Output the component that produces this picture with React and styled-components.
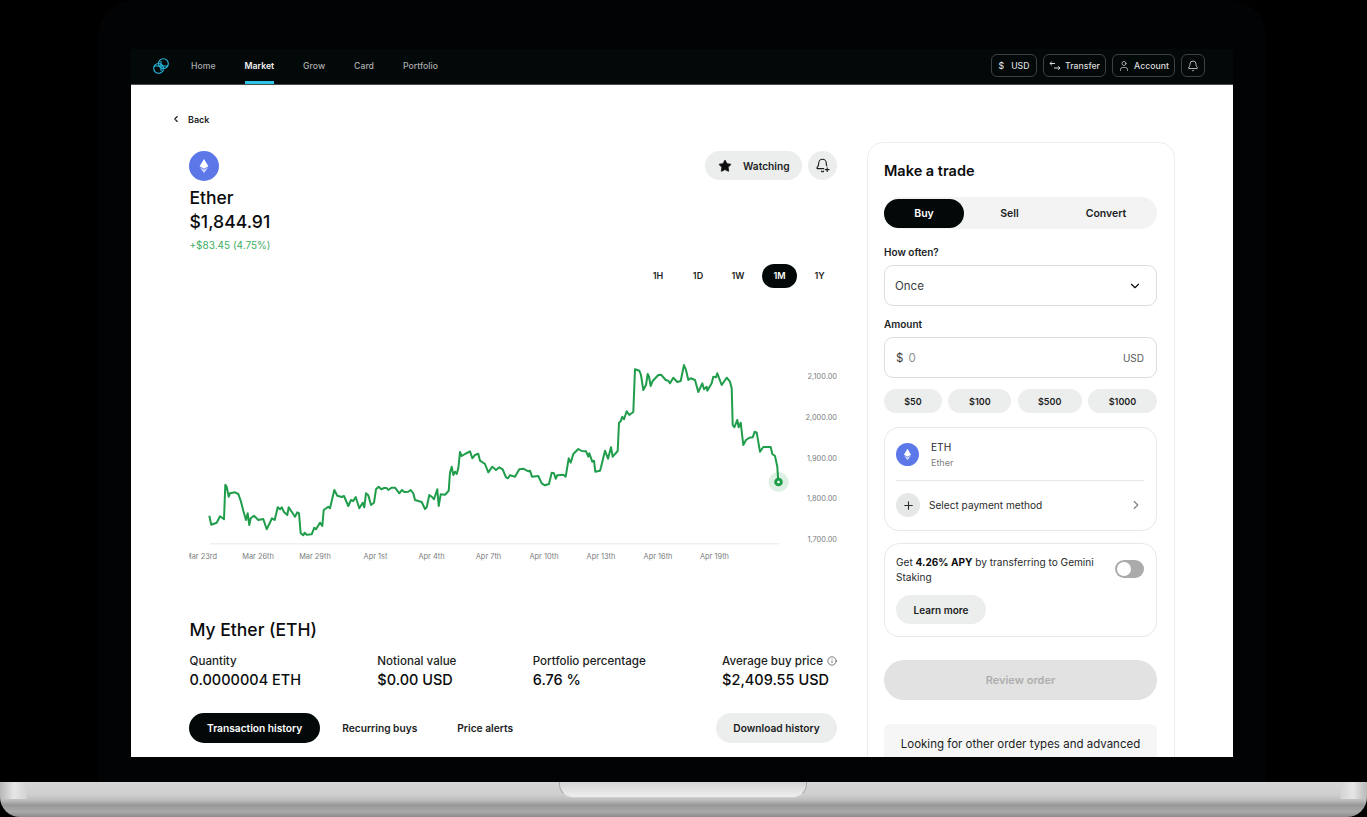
import React from 'react';
import styled, { createGlobalStyle } from 'styled-components';
import { Bell, ChevronDown, ChevronLeft, ChevronRight, Info, Plus, Star, User } from 'lucide-react';

const GlobalStyle = createGlobalStyle`
  html, body {
    margin: 0;
    background: #000;
  }
  body {
    font-family: Inter, 'Liberation Sans', sans-serif;
    color: #0a0c0d;
    overflow: hidden;
  }
  * {
    box-sizing: border-box;
  }
`;

const Page = styled.div`
  width: 1367px;
  height: 817px;
  background: #000;
  overflow: hidden;
`;

const Bezel = styled.div`
  width: 1168px;
  height: 782px;
  margin-left: 98px;
  padding: 49px 33px 25px;
  background: #020304;
  border-radius: 36px 36px 0 0;
`;

const Nav = styled.nav`
  display: flex;
  align-items: stretch;
  height: 36px;
  padding: 0 28px 0 22px;
  background: #030809;
  border-bottom: 1px solid #4a4c4d;
`;

const Logo = styled.svg`
  align-self: center;
  width: 16px;
  height: 16px;
  margin-right: 22px;
  margin-bottom: 2px;
`;

const NavLinks = styled.div`
  display: flex;
  gap: 29px;
`;

const NavLink = styled.a`
  display: flex;
  align-items: center;
  height: 35px;
  margin-bottom: -1px;
  padding-top: 1px;
  font-size: 8.7px;
  font-weight: ${({ $active }) => ($active ? 600 : 500)};
  color: ${({ $active }) => ($active ? '#f2f2f2' : '#a9abab')};
  border-bottom: 3px solid ${({ $active }) => ($active ? '#2bc3e6' : 'transparent')};
`;

const NavActions = styled.div`
  display: flex;
  align-items: center;
  gap: 6px;
  margin-left: auto;
  padding-bottom: 2px;
`;

const NavButton = styled.button`
  display: flex;
  align-items: center;
  justify-content: center;
  gap: ${({ $gap }) => $gap || 4}px;
  width: ${({ $width }) => $width}px;
  height: 23px;
  padding: 0;
  font: 500 8.7px Inter, sans-serif;
  color: #dcdddd;
  background: transparent;
  border: 1px solid #3e4142;
  border-radius: 6px;
`;

const Screen = styled.main`
  height: 672px;
  background: #fff;
  overflow: hidden;
`;

const BackRow = styled.div`
  display: flex;
  align-items: center;
  gap: 7px;
  height: 16px;
  margin: 26px 0 15px 40px;
  font-size: 9px;
  font-weight: 600;
  color: #1b1d1e;
`;

const Main = styled.div`
  display: flex;
  gap: 30px;
  padding: 0 58px;
`;

const Left = styled.section`
  flex: 1;
  min-width: 0;
  padding-top: 9px;
`;

const HeadRow = styled.div`
  display: flex;
  align-items: flex-start;
  justify-content: space-between;
  height: 30px;
`;

const Coin = styled.div`
  display: flex;
  align-items: center;
  justify-content: center;
  flex: none;
  width: ${({ $size }) => $size}px;
  height: ${({ $size }) => $size}px;
  background: #5b77e8;
  border-radius: 50%;
`;

const HeadActions = styled.div`
  display: flex;
  gap: 6px;
`;

const WatchButton = styled.button`
  display: flex;
  align-items: center;
  gap: 11px;
  width: 97px;
  height: 29px;
  padding: 0 0 0 13px;
  font: 600 10.2px Inter, sans-serif;
  color: #1b1d1e;
  background: #eceded;
  border: 0;
  border-radius: 15px;
`;

const RoundButton = styled.button`
  display: flex;
  align-items: center;
  justify-content: center;
  width: 29px;
  height: 29px;
  padding: 0;
  color: #1b1d1e;
  background: #eceded;
  border: 0;
  border-radius: 50%;
`;

const CoinName = styled.h1`
  margin: 5px 0 0;
  padding-left: 0.5px;
  font-size: 17.5px;
  font-weight: 500;
  line-height: 24px;
`;

const Price = styled.div`
  padding-left: 0.5px;
  font-size: 17.6px;
  font-weight: 500;
  line-height: 23px;
`;

const Change = styled.div`
  margin-top: 5px;
  padding-left: 0.5px;
  font-size: 10px;
  line-height: 14px;
  color: #3fae62;
`;

const RangeRow = styled.div`
  display: flex;
  justify-content: flex-end;
  gap: 5px;
  margin-top: 12px;
`;

const RangeTab = styled.span`
  display: flex;
  align-items: center;
  justify-content: center;
  width: 35px;
  height: 24px;
  margin-left: ${({ $active }) => ($active ? '1.5px' : '0')};
  padding-bottom: 1px;
  font-size: 9px;
  font-weight: 600;
  color: ${({ $active }) => ($active ? '#fff' : '#1b1d1e')};
  background: ${({ $active }) => ($active ? '#030809' : 'transparent')};
  border-radius: 12px;
`;

const ChartSvg = styled.svg`
  display: block;
  width: 648px;
  height: 300px;
  margin-top: 12px;
  overflow: hidden;
  text {
    font: 400 7.4px Inter, sans-serif;
    fill: #7b7d7e;
  }
`;

const SectionTitle = styled.h2`
  margin: 18px 0 0;
  padding-left: 0.5px;
  font-size: 17.5px;
  font-weight: 500;
  line-height: 24px;
`;

const Stats = styled.div`
  display: flex;
  justify-content: space-between;
  margin-top: 12px;
  padding-left: 0.5px;
`;

const StatLabel = styled.div`
  display: flex;
  align-items: center;
  gap: 4px;
  font-size: 11.6px;
  font-weight: 500;
  line-height: 14px;
  color: #1b1d1e;
`;

const StatValue = styled.div`
  margin-top: 3px;
  font-size: 14.5px;
  font-weight: 500;
  line-height: 18px;
  white-space: nowrap;
`;

const HistoryRow = styled.div`
  display: flex;
  align-items: center;
  margin-top: 24px;
`;

const HistoryTab = styled.span`
  display: flex;
  align-items: center;
  justify-content: center;
  height: 30px;
  margin-right: ${({ $gap }) => $gap}px;
  padding: ${({ $active }) => ($active ? '0 18px' : '0')};
  font-size: 10.2px;
  font-weight: 600;
  color: ${({ $active }) => ($active ? '#fff' : '#1b1d1e')};
  background: ${({ $active }) => ($active ? '#030809' : 'transparent')};
  border-radius: 15px;
`;

const DownloadButton = styled.button`
  width: 121px;
  height: 30px;
  margin-left: auto;
  padding: 0;
  font: 600 10.2px Inter, sans-serif;
  color: #1b1d1e;
  background: #eceded;
  border: 0;
  border-radius: 15px;
`;

const TradeCard = styled.aside`
  flex: none;
  width: 308px;
  height: 700px;
  padding: 16px 17px 16px 16px;
  border: 1px solid #ededed;
  border-radius: 16px;
`;

const TradeTitle = styled.h2`
  margin: 0;
  font-size: 14.5px;
  font-weight: 600;
  line-height: 24px;
`;

const Segment = styled.div`
  display: flex;
  align-items: center;
  height: 32px;
  margin-top: 14px;
  background: #f3f3f3;
  border-radius: 16px;
`;

const SegmentItem = styled.span`
  display: flex;
  align-items: center;
  justify-content: center;
  width: ${({ $width }) => $width}px;
  height: 29px;
  font-size: 10.5px;
  font-weight: 600;
  color: ${({ $active }) => ($active ? '#fff' : '#1b1d1e')};
  background: ${({ $active }) => ($active ? '#030809' : 'transparent')};
  border-radius: 15px;
`;

const FieldLabel = styled.div`
  margin-top: ${({ $top }) => $top}px;
  font-size: 10px;
  font-weight: 600;
  line-height: 14px;
  color: #1b1d1e;
`;

const Field = styled.div`
  display: flex;
  align-items: center;
  justify-content: space-between;
  height: 41px;
  margin-top: 6px;
  padding: 0 ${({ $right }) => $right}px 0 ${({ $left }) => $left}px;
  font-size: 11.5px;
  color: #3c3e3f;
  border: 1px solid #dcdddd;
  border-radius: 9px;
`;

const AmountValue = styled.span`
  display: flex;
  gap: 5px;
  color: #8d8f90;
  b {
    font-weight: 400;
    color: #3c3e3f;
  }
`;

const UsdLabel = styled.span`
  font-size: 10px;
  color: #55585a;
`;

const Chips = styled.div`
  display: flex;
  justify-content: space-between;
  margin-top: 11px;
`;

const Chip = styled.span`
  display: flex;
  align-items: center;
  justify-content: center;
  width: ${({ $width }) => $width}px;
  height: 24px;
  font-size: 9px;
  font-weight: 600;
  color: #1b1d1e;
  background: #eceded;
  border-radius: 12px;
`;

const Panel = styled.div`
  margin-top: ${({ $top }) => $top}px;
  padding: 0 12px 0 11px;
  height: ${({ $height }) => $height}px;
  border: 1px solid #e8e8e8;
  border-radius: 15px;
`;

const AssetRow = styled.div`
  display: flex;
  align-items: center;
  gap: 12px;
  height: 53px;
  border-bottom: 1px solid #e8e8e8;
`;

const AssetText = styled.div`
  padding-top: 1px;
`;

const AssetName = styled.div`
  font-size: 10.2px;
  line-height: 16px;
  color: #2a2c2d;
`;

const AssetSub = styled.div`
  font-size: 9px;
  line-height: 16px;
  color: #7d7f80;
`;

const PayRow = styled.div`
  display: flex;
  align-items: center;
  gap: 9px;
  height: 48px;
  font-size: 10.1px;
  color: #2a2c2d;
`;

const PlusCircle = styled.div`
  display: flex;
  align-items: center;
  justify-content: center;
  width: 24px;
  height: 24px;
  background: #e6e7e7;
  border-radius: 50%;
`;

const PayChevron = styled.span`
  display: flex;
  margin: 0 1px 0 auto;
  color: #808283;
`;

const StakeTop = styled.div`
  display: flex;
  justify-content: space-between;
  padding-top: 11px;
`;

const StakeText = styled.p`
  width: 210px;
  margin: 0;
  font-size: 10.1px;
  line-height: 15px;
  color: #2a2c2d;
  b {
    font-weight: 700;
    color: #0a0c0d;
  }
`;

const Toggle = styled.div`
  display: flex;
  align-items: center;
  width: 29px;
  height: 18px;
  margin-top: 5px;
  padding: 0 2px;
  background: #ababab;
  border-radius: 9px;
  &::before {
    content: '';
    width: 14px;
    height: 14px;
    background: #fff;
    border-radius: 50%;
  }
`;

const LearnButton = styled.button`
  display: block;
  width: 90px;
  height: 29px;
  margin-top: 10px;
  padding: 0;
  font: 600 10px Inter, sans-serif;
  color: #1b1d1e;
  background: #eceded;
  border: 0;
  border-radius: 15px;
`;

const ReviewButton = styled.button`
  display: block;
  width: 100%;
  height: 40px;
  margin-top: 23px;
  padding: 0;
  font: 600 11px Inter, sans-serif;
  color: #aeaeae;
  background: #e2e2e2;
  border: 0;
  border-radius: 20px;
`;

const MoreBox = styled.div`
  height: 90px;
  margin-top: 24px;
  padding-top: 13px;
  font-size: 11.5px;
  line-height: 15px;
  text-align: center;
  color: #1b1d1e;
  background: #f6f6f6;
  border-radius: 6px;
`;

const Base = styled.div`
  position: relative;
  height: 35px;
  background:
    linear-gradient(90deg, #b8b8b8 0, #e6e6e6 14px, #d4d4d4 26px, rgba(214, 214, 214, 0) 27px) left top / 30px 17px no-repeat,
    linear-gradient(270deg, #b8b8b8 0, #e6e6e6 14px, #d4d4d4 26px, rgba(214, 214, 214, 0) 27px) right top / 30px 17px no-repeat,
    linear-gradient(180deg, #d6d6d6 0%, #cfcfcf 35%, #bdbdbd 52%, #989898 66%, #a9a9a9 85%, #8a8a8a 100%);
  border-radius: 0 0 20px 20px;
`;

const Notch = styled.div`
  position: absolute;
  top: 0;
  left: 559px;
  width: 248px;
  height: 16px;
  background: linear-gradient(180deg, #d4d4d4 0%, #eeeeee 100%);
  border: 1px solid #a8a8a8;
  border-top: 0;
  border-bottom-color: #cfcfcf;
  border-radius: 0 0 14px 14px;
`;

const EthGlyph = ({ size }) => (
  <svg width={size} height={size} viewBox="0 0 16 16">
    <path d="M8 1 L12.4 8.2 L8 10.8 L3.6 8.2 Z" fill="#fff" />
    <path d="M8 11.8 L12.2 9.2 L8 15 L3.8 9.2 Z" fill="#fff" opacity="0.75" />
  </svg>
);

const TransferIcon = () => (
  <svg width="12" height="12" viewBox="0 0 12 12" fill="none" stroke="#dcdddd" strokeWidth="1">
    <path d="M6 3.5 H1 M2.8 1.6 L1 3.5 L2.8 5.2" />
    <path d="M5 8 H11 M9.2 6.2 L11 8 L9.2 9.8" />
  </svg>
);

// bell with the plus at its lower right
const AlertBell = () => (
  <svg width="15" height="15" viewBox="0 0 24 24" fill="none" stroke="currentColor" strokeWidth="1.8" strokeLinecap="round" strokeLinejoin="round">
    <path d="M10.3 21a2 2 0 0 0 3.4 0" />
    <path d="M14 17H4a1 1 0 0 1-.7-1.7C4.6 14 6 12.5 6 8a6 6 0 0 1 12 0c0 2 .3 3.5.8 4.6" />
    <path d="M19.5 15.5v6 M16.5 18.5h6" />
  </svg>
);

// first part read at (180,350), second at (500,350), both at 3x
const lineA = [[88,497],[94,524],[110,518],[120,499],[132,508],[136,404],[140,410],[146,440],[150,430],[165,427],[175,432],[183,455],[190,482],[198,510],[203,490],[208,525],[212,505],[222,497],[235,510],[250,507],[260,538],[268,522],[276,505],[284,510],[293,472],[300,478],[305,472],[312,486],[322,495],[326,472],[335,485],[345,500],[352,487],[357,490],[362,550],[370,556],[374,548],[380,554],[395,553],[403,533],[408,538],[420,518],[427,528],[431,480],[445,470],[450,475],[463,420],[472,437],[485,441],[492,438],[505,468],[513,450],[520,453],[527,441],[538,475],[548,458],[553,472],[558,430],[565,436],[573,465],[582,458],[588,418],[596,410],[604,418],[612,414],[620,414],[625,420],[635,413],[645,413],[658,430],[666,420],[673,426],[685,425],[692,420],[700,430],[705,450],[725,456],[735,477],[740,472],[748,435],[755,440],[762,448],[772,418],[776,468],[782,433],[795,434],[806,422],[810,368],[815,350],[820,375],[825,365],[830,372],[835,355],[840,306],[845,318],[855,312],[870,304],[877,325],[885,315],[895,311],[900,332],[915,342],[925,367],[937,350],[948,360],[958,352]];
const lineB = [[8,358],[18,382],[24,385],[30,376],[45,380],[52,368],[58,358],[70,356],[85,364],[90,362],[96,380],[115,378],[125,400],[135,406],[147,402],[155,368],[162,370],[167,386],[172,376],[190,374],[197,380],[206,325],[212,338],[220,312],[235,297],[245,303],[258,304],[265,320],[268,310],[277,335],[282,332],[286,365],[300,362],[303,352],[315,302],[324,326],[333,292],[338,320],[353,303],[357,218],[362,214],[367,200],[372,208],[380,184],[388,195],[400,186],[405,58],[418,62],[423,75],[430,120],[438,105],[443,72],[447,80],[452,108],[458,93],[475,75],[483,74],[497,90],[505,92],[510,100],[520,83],[532,96],[542,93],[552,45],[558,60],[565,90],[572,85],[585,90],[595,126],[607,100],[612,118],[620,110],[622,122],[635,100],[640,80],[648,82],[652,70],[665,105],[680,83],[690,95],[695,115],[698,225],[703,232],[712,210],[716,232],[722,218],[730,285],[738,270],[748,263],[758,262],[764,245],[770,248],[780,305],[790,291],[812,291],[817,312],[825,318],[832,350],[835,395]];

const linePoints = [
  ...lineA.map(([x, y]) => [180 + x / 3 - 189, 350 + y / 3 - 300]),
  ...lineB.map(([x, y]) => [500 + x / 3 - 189, 350 + y / 3 - 300]),
]
  .map(([x, y]) => `${x.toFixed(1)},${y.toFixed(1)}`)
  .join(' ');

const xLabels = [
  ['Mar 23rd', 12],
  ['Mar 26th', 69],
  ['Mar 29th', 126],
  ['Apr 1st', 186.5],
  ['Apr 4th', 242.5],
  ['Apr 7th', 299.5],
  ['Apr 10th', 355],
  ['Apr 13th', 412],
  ['Apr 16th', 469],
  ['Apr 19th', 525.5],
];

const yLabels = [
  ['2,100.00', 76],
  ['2,000.00', 117],
  ['1,900.00', 157.5],
  ['1,800.00', 198],
  ['1,700.00', 239],
];

const Chart = () => (
  <ChartSvg viewBox="0 0 648 300">
    <line x1="21" y1="243.8" x2="590" y2="243.8" stroke="#efefef" strokeWidth="1.5" />
    <polyline points={linePoints} fill="none" stroke="#1f9d4b" strokeWidth="2" strokeLinejoin="round" />
    <circle cx="589.5" cy="182" r="10" fill="#1f9d4b" opacity="0.15" />
    <circle cx="589.5" cy="182" r="2.8" fill="#fff" stroke="#1f9d4b" strokeWidth="3" />
    {xLabels.map(([label, x]) => (
      <text key={label} x={x} y="259" textAnchor="middle">
        {label}
      </text>
    ))}
    {yLabels.map(([label, y]) => (
      <text key={label} x="648" y={y + 3} textAnchor="end">
        {label}
      </text>
    ))}
  </ChartSvg>
);

export default function App() {
  return (
    <>
      <GlobalStyle />
      <Page>
        <Bezel>
          <Nav>
            <Logo viewBox="0 0 16 16" fill="none" stroke="#27bde2" strokeWidth="1.1">
              <circle cx="10.4" cy="5.6" r="4.9" />
              <circle cx="5.6" cy="10.4" r="4.9" />
              <path d="M0.9 8 H15.1 M8 3 V13" />
            </Logo>
            <NavLinks>
              <NavLink>Home</NavLink>
              <NavLink $active>Market</NavLink>
              <NavLink>Grow</NavLink>
              <NavLink>Card</NavLink>
              <NavLink>Portfolio</NavLink>
            </NavLinks>
            <NavActions>
              <NavButton $width={46} $gap={7}>
                <span>$</span>
                <span>USD</span>
              </NavButton>
              <NavButton $width={63}>
                <TransferIcon />
                Transfer
              </NavButton>
              <NavButton $width={63}>
                <User size={12} strokeWidth={1.4} />
                Account
              </NavButton>
              <NavButton $width={24}>
                <Bell size={12} strokeWidth={1.6} />
              </NavButton>
            </NavActions>
          </Nav>
          <Screen>
            <BackRow>
              <ChevronLeft size={10} strokeWidth={2.6} />
              Back
            </BackRow>
            <Main>
              <Left>
                <HeadRow>
                  <Coin $size={30}>
                    <EthGlyph size={16} />
                  </Coin>
                  <HeadActions>
                    <WatchButton>
                      <Star size={14} fill="#0a0c0d" strokeWidth={1.5} />
                      Watching
                    </WatchButton>
                    <RoundButton>
                      <AlertBell />
                    </RoundButton>
                  </HeadActions>
                </HeadRow>
                <CoinName>Ether</CoinName>
                <Price>$1,844.91</Price>
                <Change>+$83.45 (4.75%)</Change>
                <RangeRow>
                  <RangeTab>1H</RangeTab>
                  <RangeTab>1D</RangeTab>
                  <RangeTab>1W</RangeTab>
                  <RangeTab $active>1M</RangeTab>
                  <RangeTab>1Y</RangeTab>
                </RangeRow>
                <Chart />
                <SectionTitle>My Ether (ETH)</SectionTitle>
                <Stats>
                  <div>
                    <StatLabel>Quantity</StatLabel>
                    <StatValue>0.0000004 ETH</StatValue>
                  </div>
                  <div>
                    <StatLabel>Notional value</StatLabel>
                    <StatValue>$0.00 USD</StatValue>
                  </div>
                  <div>
                    <StatLabel>Portfolio percentage</StatLabel>
                    <StatValue>6.76 %</StatValue>
                  </div>
                  <div>
                    <StatLabel>
                      Average buy price
                      <Info size={10} strokeWidth={1.4} />
                    </StatLabel>
                    <StatValue>$2,409.55 USD</StatValue>
                  </div>
                </Stats>
                <HistoryRow>
                  <HistoryTab $active $gap={22}>Transaction history</HistoryTab>
                  <HistoryTab $gap={40}>Recurring buys</HistoryTab>
                  <HistoryTab $gap={0}>Price alerts</HistoryTab>
                  <DownloadButton>Download history</DownloadButton>
                </HistoryRow>
              </Left>
              <TradeCard>
                <TradeTitle>Make a trade</TradeTitle>
                <Segment>
                  <SegmentItem $active $width={80}>Buy</SegmentItem>
                  <SegmentItem $width={91}>Sell</SegmentItem>
                  <SegmentItem $width={102}>Convert</SegmentItem>
                </Segment>
                <FieldLabel $top={16}>How often?</FieldLabel>
                <Field $left={10} $right={14}>
                  Once
                  <ChevronDown size={14} strokeWidth={2} color="#0a0c0d" />
                </Field>
                <FieldLabel $top={11}>Amount</FieldLabel>
                <Field $left={11} $right={12}>
                  <AmountValue>
                    <b>$</b>0
                  </AmountValue>
                  <UsdLabel>USD</UsdLabel>
                </Field>
                <Chips>
                  <Chip $width={58}>$50</Chip>
                  <Chip $width={63}>$100</Chip>
                  <Chip $width={64}>$500</Chip>
                  <Chip $width={69}>$1000</Chip>
                </Chips>
                <Panel $top={14} $height={104}>
                  <AssetRow>
                    <Coin $size={23}>
                      <EthGlyph size={13} />
                    </Coin>
                    <AssetText>
                      <AssetName>ETH</AssetName>
                      <AssetSub>Ether</AssetSub>
                    </AssetText>
                  </AssetRow>
                  <PayRow>
                    <PlusCircle>
                      <Plus size={13} strokeWidth={2} color="#2a2c2d" />
                    </PlusCircle>
                    Select payment method
                    <PayChevron>
                      <ChevronRight size={14} strokeWidth={2} />
                    </PayChevron>
                  </PayRow>
                </Panel>
                <Panel $top={12} $height={94}>
                  <StakeTop>
                    <StakeText>
                      Get <b>4.26% APY</b> by transferring to Gemini Staking
                    </StakeText>
                    <Toggle />
                  </StakeTop>
                  <LearnButton>Learn more</LearnButton>
                </Panel>
                <ReviewButton>Review order</ReviewButton>
                <MoreBox>Looking for other order types and advanced</MoreBox>
              </TradeCard>
            </Main>
          </Screen>
        </Bezel>
        <Base>
          <Notch />
        </Base>
      </Page>
    </>
  );
}
